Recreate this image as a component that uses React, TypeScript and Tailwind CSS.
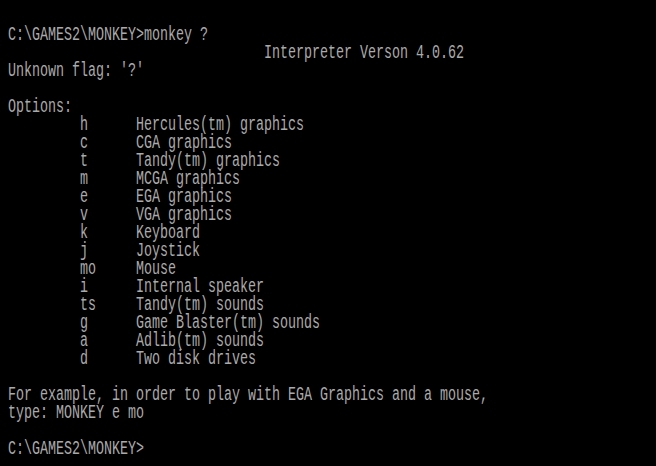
const lines = [
  'C:\\GAMES2\\MONKEY>monkey ?',
  '                                Interpreter Verson 4.0.62',
  "Unknown flag: '?'",
  '',
  'Options:',
  '         h      Hercules(tm) graphics',
  '         c      CGA graphics',
  '         t      Tandy(tm) graphics',
  '         m      MCGA graphics',
  '         e      EGA graphics',
  '         v      VGA graphics',
  '         k      Keyboard',
  '         j      Joystick',
  '         mo     Mouse',
  '         i      Internal speaker',
  '         ts     Tandy(tm) sounds',
  '         g      Game Blaster(tm) sounds',
  '         a      Adlib(tm) sounds',
  '         d      Two disk drives',
  '',
  'For example, in order to play with EGA Graphics and a mouse,',
  'type: MONKEY e mo',
  '',
  'C:\\GAMES2\\MONKEY>',
];

export default function App() {
  return (
    <div className="w-[656px] h-[466px] bg-black overflow-hidden pt-[26px] pl-2">
      {/* text set wide, then squeezed to an 8px cell */}
      <div className="origin-top-left scale-x-[0.6667] w-[960px] font-['Liberation_Mono',monospace] text-[20px] leading-[18px] text-[#aaaaaa] whitespace-pre">
        {lines.map((l, i) => (
          <div key={i} className="h-[18px]">{l}</div>
        ))}
      </div>
    </div>
  );
}
